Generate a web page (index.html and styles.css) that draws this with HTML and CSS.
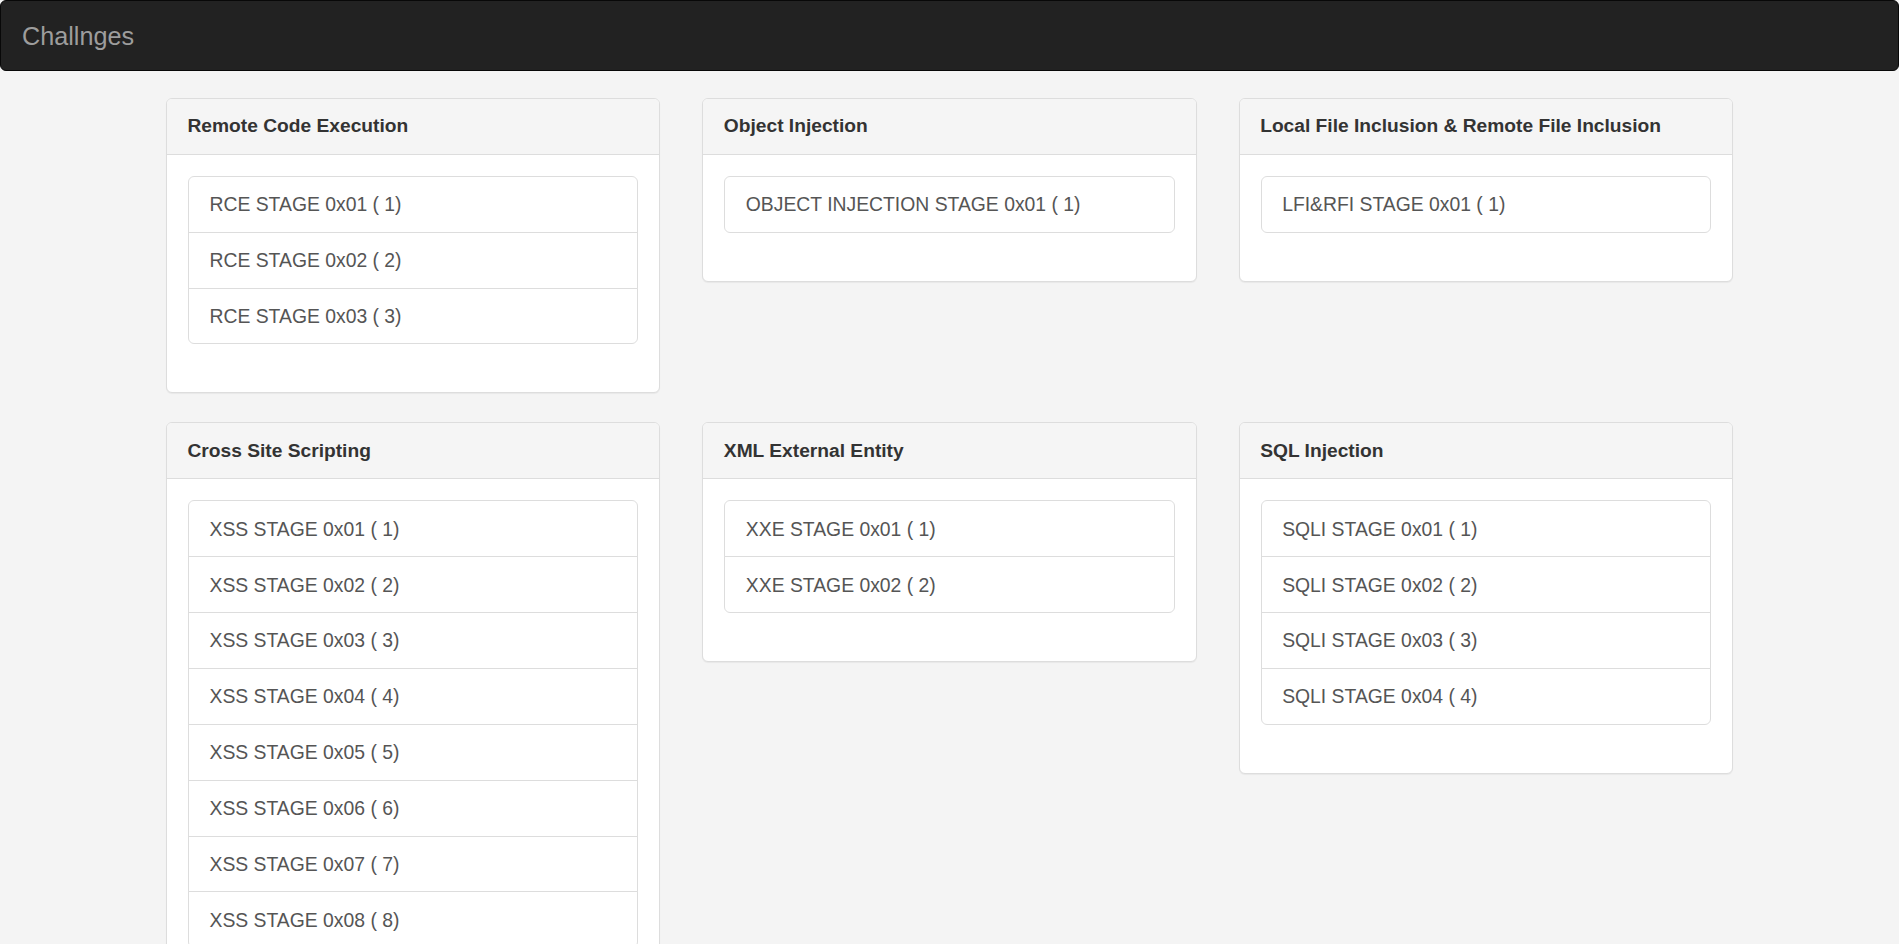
FILE: index.html
```html
<!DOCTYPE html>
<html lang="en">
<head>
<meta charset="utf-8">
<title>Challnges</title>
<link rel="stylesheet" href="styles.css">
</head>
<body>
<nav class="navbar">
  <a class="brand" href="#">Challnges</a>
</nav>
<main class="container">
  <section class="panel">
    <div class="panel-heading">Remote Code Execution</div>
    <div class="panel-body">
      <div class="list-group">
        <a class="list-item" href="#">RCE STAGE 0x01 ( 1)</a>
        <a class="list-item" href="#">RCE STAGE 0x02 ( 2)</a>
        <a class="list-item" href="#">RCE STAGE 0x03 ( 3)</a>
      </div>
    </div>
  </section>
  <section class="panel">
    <div class="panel-heading">Object Injection</div>
    <div class="panel-body">
      <div class="list-group">
        <a class="list-item" href="#">OBJECT INJECTION STAGE 0x01 ( 1)</a>
      </div>
    </div>
  </section>
  <section class="panel">
    <div class="panel-heading">Local File Inclusion &amp; Remote File Inclusion</div>
    <div class="panel-body">
      <div class="list-group">
        <a class="list-item" href="#">LFI&amp;RFI STAGE 0x01 ( 1)</a>
      </div>
    </div>
  </section>
  <section class="panel">
    <div class="panel-heading">Cross Site Scripting</div>
    <div class="panel-body">
      <div class="list-group">
        <a class="list-item" href="#">XSS STAGE 0x01 ( 1)</a>
        <a class="list-item" href="#">XSS STAGE 0x02 ( 2)</a>
        <a class="list-item" href="#">XSS STAGE 0x03 ( 3)</a>
        <a class="list-item" href="#">XSS STAGE 0x04 ( 4)</a>
        <a class="list-item" href="#">XSS STAGE 0x05 ( 5)</a>
        <a class="list-item" href="#">XSS STAGE 0x06 ( 6)</a>
        <a class="list-item" href="#">XSS STAGE 0x07 ( 7)</a>
        <a class="list-item" href="#">XSS STAGE 0x08 ( 8)</a>
      </div>
    </div>
  </section>
  <section class="panel">
    <div class="panel-heading">XML External Entity</div>
    <div class="panel-body">
      <div class="list-group">
        <a class="list-item" href="#">XXE STAGE 0x01 ( 1)</a>
        <a class="list-item" href="#">XXE STAGE 0x02 ( 2)</a>
      </div>
    </div>
  </section>
  <section class="panel">
    <div class="panel-heading">SQL Injection</div>
    <div class="panel-body">
      <div class="list-group">
        <a class="list-item" href="#">SQLI STAGE 0x01 ( 1)</a>
        <a class="list-item" href="#">SQLI STAGE 0x02 ( 2)</a>
        <a class="list-item" href="#">SQLI STAGE 0x03 ( 3)</a>
        <a class="list-item" href="#">SQLI STAGE 0x04 ( 4)</a>
      </div>
    </div>
  </section>
</main>
</body>
</html>
```
FILE: styles.css
```css
* { box-sizing: border-box; }

html, body {
  margin: 0;
  padding: 0;
}

body {
  background: #f4f4f4;
  font-family: "Liberation Sans", Arial, Helvetica, sans-serif;
  font-size: 19.35px;
  line-height: 28px;
  color: #333;
}

.navbar {
  height: 71px;
  background: #222;
  border: 1px solid #080808;
  border-radius: 6px;
  margin-bottom: 26.5px;
  display: flex;
  align-items: flex-start;
}

.brand {
  display: block;
  padding: 20.5px 21px;
  font-size: 25.2px;
  line-height: 28px;
  color: #9d9d9d;
  text-decoration: none;
}

.container {
  width: 1567px;
  margin: 0 auto;
  display: grid;
  grid-template-columns: repeat(3, 1fr);
  column-gap: 42px;
  row-gap: 28.5px;
  align-items: start;
}

.panel {
  background: #fff;
  border: 1px solid #ddd;
  border-radius: 6px;
  box-shadow: 0 1px 1px rgba(0, 0, 0, 0.05);
  overflow: hidden;
}

.panel-heading {
  background: #f5f5f5;
  border-bottom: 1px solid #ddd;
  padding: 13.75px 20.5px 13.5px;
  font-weight: bold;
  font-size: 19.2px;
  line-height: 28px;
  color: #333;
}

.panel-body {
  padding: 21px 21px 20.5px;
}

.list-group {
  display: flex;
  flex-direction: column;
  margin-bottom: 27.5px;
}

.list-item {
  display: block;
  padding: 13.5px 20.5px 13.5px;
  border: 1px solid #ddd;
  margin-bottom: -1px;
  background: #fff;
  color: #555;
  text-decoration: none;
  line-height: 28px;
  height: 56.9px;
}

.list-item:first-child {
  border-top-left-radius: 6px;
  border-top-right-radius: 6px;
}

.list-item:last-child {
  margin-bottom: 0;
  border-bottom-left-radius: 6px;
  border-bottom-right-radius: 6px;
}
```
